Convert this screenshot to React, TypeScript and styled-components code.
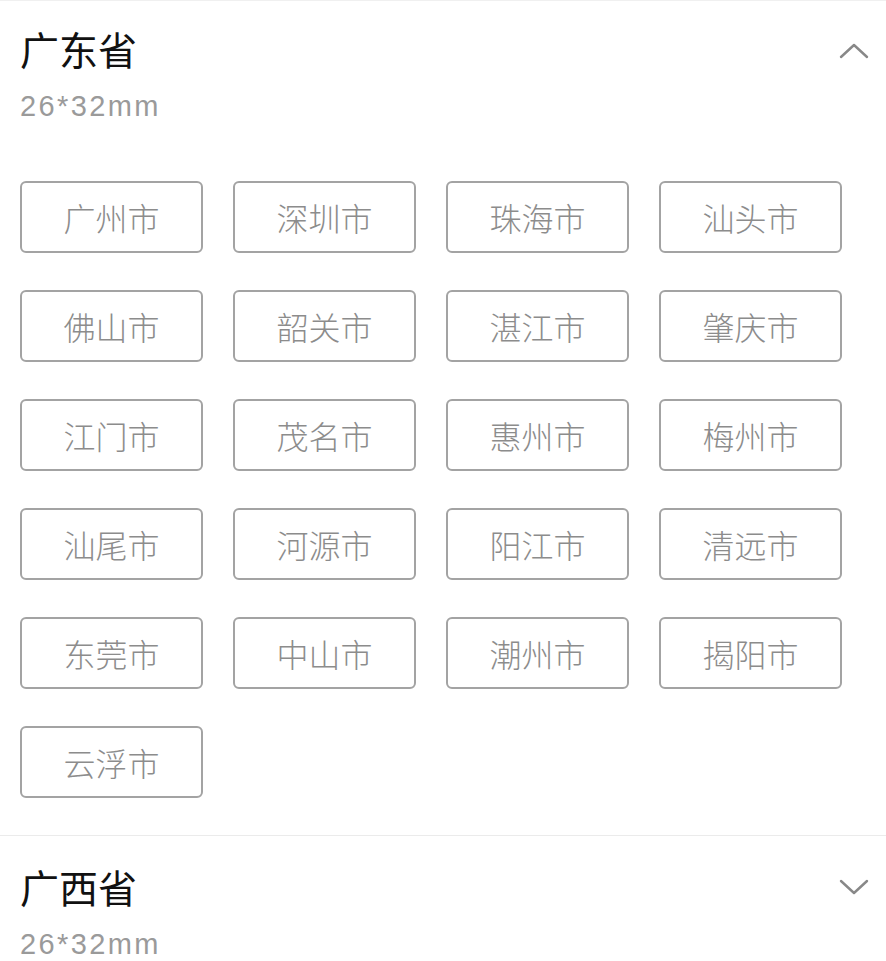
import React from "react";
import styled, { createGlobalStyle } from "styled-components";

const GlobalStyle = createGlobalStyle`
  html, body {
    margin: 0;
    padding: 0;
    background: #ffffff;
  }
  body {
    font-family: "Liberation Sans", "Noto Sans CJK SC", sans-serif;
  }
`;

const Page = styled.div`
  width: 886px;
  border-top: 1px solid #f0f0f0;
`;

const Section = styled.section<{ $last?: boolean }>`
  padding: 0 20px ${(p) => (p.$last ? "0" : "37px")};
  border-bottom: ${(p) => (p.$last ? "none" : "1px solid #ebebeb")};
`;

const Header = styled.div`
  display: flex;
  justify-content: space-between;
  align-items: flex-start;
`;

const TitleBlock = styled.div`
  display: flex;
  flex-direction: column;
`;

const Title = styled.div<{ $offset: number }>`
  margin-top: ${(p) => p.$offset}px;
  font-family: "Noto Sans CJK SC", sans-serif;
  font-size: 39px;
  line-height: 50px;
  color: #111111;
`;

const Sub = styled.div`
  margin-top: 16px;
  font-family: "Liberation Sans", sans-serif;
  font-size: 29px;
  line-height: 34px;
  letter-spacing: 2.4px;
  color: #9a9a9a;
`;

const Chevron = styled.svg<{ $offset: number }>`
  margin-top: ${(p) => p.$offset}px;
  margin-right: -3px;
  width: 30px;
  height: 16px;
`;

const Grid = styled.div`
  margin-top: 58px;
  display: grid;
  grid-template-columns: repeat(4, 183px);
  column-gap: 30px;
  row-gap: 37px;
`;

const CityButton = styled.button`
  box-sizing: border-box;
  height: 72px;
  border: 2px solid #a3a3a3;
  border-radius: 6px;
  background: #ffffff;
  font-family: "Noto Sans CJK SC", sans-serif;
  font-weight: 300;
  font-size: 32px;
  color: #8c8c8c;
  padding: 0;
  display: flex;
  align-items: center;
  justify-content: center;
`;

const cities = [
  "广州市", "深圳市", "珠海市", "汕头市",
  "佛山市", "韶关市", "湛江市", "肇庆市",
  "江门市", "茂名市", "惠州市", "梅州市",
  "汕尾市", "河源市", "阳江市", "清远市",
  "东莞市", "中山市", "潮州市", "揭阳市",
  "云浮市",
];

const ChevronIcon: React.FC<{ up: boolean; offset: number }> = ({ up, offset }) => (
  <Chevron viewBox="0 0 30 16" $offset={offset}>
    <polyline
      points={up ? "2,14 15,2 28,14" : "2,2 15,14 28,2"}
      fill="none"
      stroke="#888888"
      strokeWidth="2.4"
      strokeLinecap="round"
      strokeLinejoin="round"
    />
  </Chevron>
);

export default function App() {
  return (
    <Page>
      <GlobalStyle />
      <Section>
        <Header>
          <TitleBlock>
            <Title $offset={22}>广东省</Title>
            <Sub>26*32mm</Sub>
          </TitleBlock>
          <ChevronIcon up offset={42} />
        </Header>
        <Grid>
          {cities.map((c) => (
            <CityButton key={c}>{c}</CityButton>
          ))}
        </Grid>
      </Section>
      <Section $last>
        <Header>
          <TitleBlock>
            <Title $offset={25}>广西省</Title>
            <Sub>26*32mm</Sub>
          </TitleBlock>
          <ChevronIcon up={false} offset={43} />
        </Header>
      </Section>
    </Page>
  );
}
